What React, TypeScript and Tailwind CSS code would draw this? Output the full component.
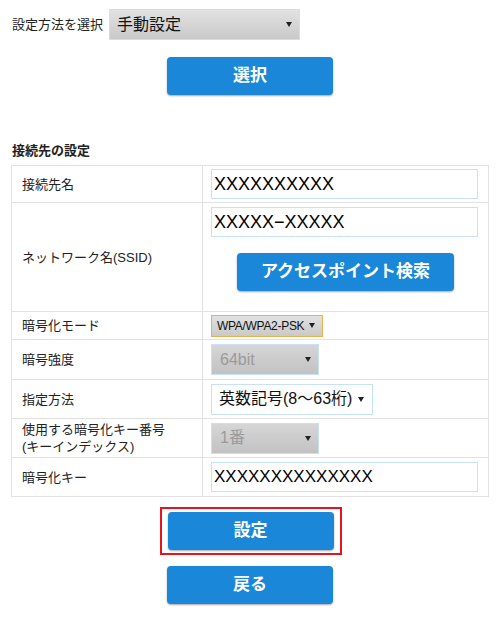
import React from "react";

function Arrow() {
  return (
    <svg width="6" height="5" viewBox="0 0 6 5" className="shrink-0">
      <path d="M0 0 L6 0 L3 5 Z" fill="#222" />
    </svg>
  );
}

function Btn({ children, w = "w-[166px]" }: { children: React.ReactNode; w?: string }) {
  return (
    <div
      className={`${w} h-[38px] rounded-[4px] bg-[#1a87d9] shadow-[0_1px_2px_rgba(0,0,0,0.35)] flex items-center justify-center text-white font-bold text-[17px]`}
    >
      {children}
    </div>
  );
}

function TextBox({ value, size }: { value: string; size: string }) {
  return (
    <div className={`w-[267px] h-[30px] border border-[#c9e1f5] bg-white flex items-center pl-[2px] text-black ${size}`}>
      {value}
    </div>
  );
}

export default function App() {
  const labelCell = "w-[191px] border border-[#e2e2e2] pl-[10px] align-middle text-[13px] text-[#222] leading-[17px]";
  const valueCell = "border border-[#e2e2e2] pl-[8px] align-middle";
  return (
    <div className="w-[500px] h-[620px] bg-white font-['Liberation_Sans','Noto_Sans_CJK_JP',sans-serif] text-[#222]">
      <div className="flex items-center pt-[9px] pl-[12px]">
        <span className="text-[13px]">設定方法を選択</span>
        <div className="ml-[6px] w-[191px] h-[31px] border border-[#c9e1f5] bg-gradient-to-b from-[#e2e2e2] to-[#c9c9c9] flex items-center justify-between pl-[7px] pr-[7px]">
          <span className="text-[16px] text-[#111]">手動設定</span>
          <Arrow />
        </div>
      </div>

      <div className="flex justify-center mt-[17px]">
        <Btn>選択</Btn>
      </div>

      <div className="mt-[47px] pl-[12px] text-[13px] font-bold leading-[18px]">接続先の設定</div>

      <table className="ml-[11px] mt-[5px] w-[478px] border-collapse">
        <tbody>
          <tr className="h-[37px]">
            <td className={labelCell}>接続先名</td>
            <td className={valueCell}>
              <TextBox value="XXXXXXXXXX" size="text-[18px]" />
            </td>
          </tr>
          <tr className="h-[109px]">
            <td className={labelCell}>ネットワーク名(SSID)</td>
            <td className={`${valueCell} align-top pt-[4px]`}>
              <TextBox value="XXXXX−XXXXX" size="text-[18px]" />
              <div className="mt-[16px] ml-[26px]">
                <Btn w="w-[217px]">アクセスポイント検索</Btn>
              </div>
            </td>
          </tr>
          <tr className="h-[28px]">
            <td className={labelCell}>暗号化モード</td>
            <td className={valueCell}>
              <div className="w-[112px] h-[22px] border border-[#e6b34d] bg-gradient-to-b from-[#e2e2e2] to-[#c9c9c9] flex items-center justify-between pl-[5px] pr-[7px]">
                <span className="text-[12px] tracking-[-0.3px] text-[#111]">WPA/WPA2-PSK</span>
                <Arrow />
              </div>
            </td>
          </tr>
          <tr className="h-[40px]">
            <td className={labelCell}>暗号強度</td>
            <td className={valueCell}>
              <div className="w-[108px] h-[31px] border border-[#c9e1f5] bg-gradient-to-b from-[#d6d6d6] to-[#c2c2c2] flex items-center justify-between pl-[8px] pr-[7px]">
                <span className="text-[16px] text-[#9a9a9a]">64bit</span>
                <Arrow />
              </div>
            </td>
          </tr>
          <tr className="h-[39px]">
            <td className={labelCell}>指定方法</td>
            <td className={valueCell}>
              <div className="w-[162px] h-[31px] border border-[#c9e1f5] bg-white flex items-center justify-between pl-[7px] pr-[8px]">
                <span className="text-[16px] text-[#111]">英数記号(8〜63桁)</span>
                <Arrow />
              </div>
            </td>
          </tr>
          <tr className="h-[39px]">
            <td className={labelCell}>
              使用する暗号化キー番号
              <br />
              (キーインデックス)
            </td>
            <td className={valueCell}>
              <div className="w-[108px] h-[31px] border border-[#c9e1f5] bg-gradient-to-b from-[#d6d6d6] to-[#c2c2c2] flex items-center justify-between pl-[8px] pr-[7px]">
                <span className="text-[16px] text-[#9a9a9a]">1番</span>
                <Arrow />
              </div>
            </td>
          </tr>
          <tr className="h-[39px]">
            <td className={labelCell}>暗号化キー</td>
            <td className={valueCell}>
              <TextBox value="XXXXXXXXXXXXXX" size="text-[17px]" />
            </td>
          </tr>
        </tbody>
      </table>

      <div className="flex justify-center mt-[10px]">
        <div className="border-2 border-[#e8141b] px-[6px] py-[3px] ml-[1px]">
          <Btn>設定</Btn>
        </div>
      </div>

      <div className="flex justify-center mt-[11px]">
        <Btn>戻る</Btn>
      </div>
    </div>
  );
}
